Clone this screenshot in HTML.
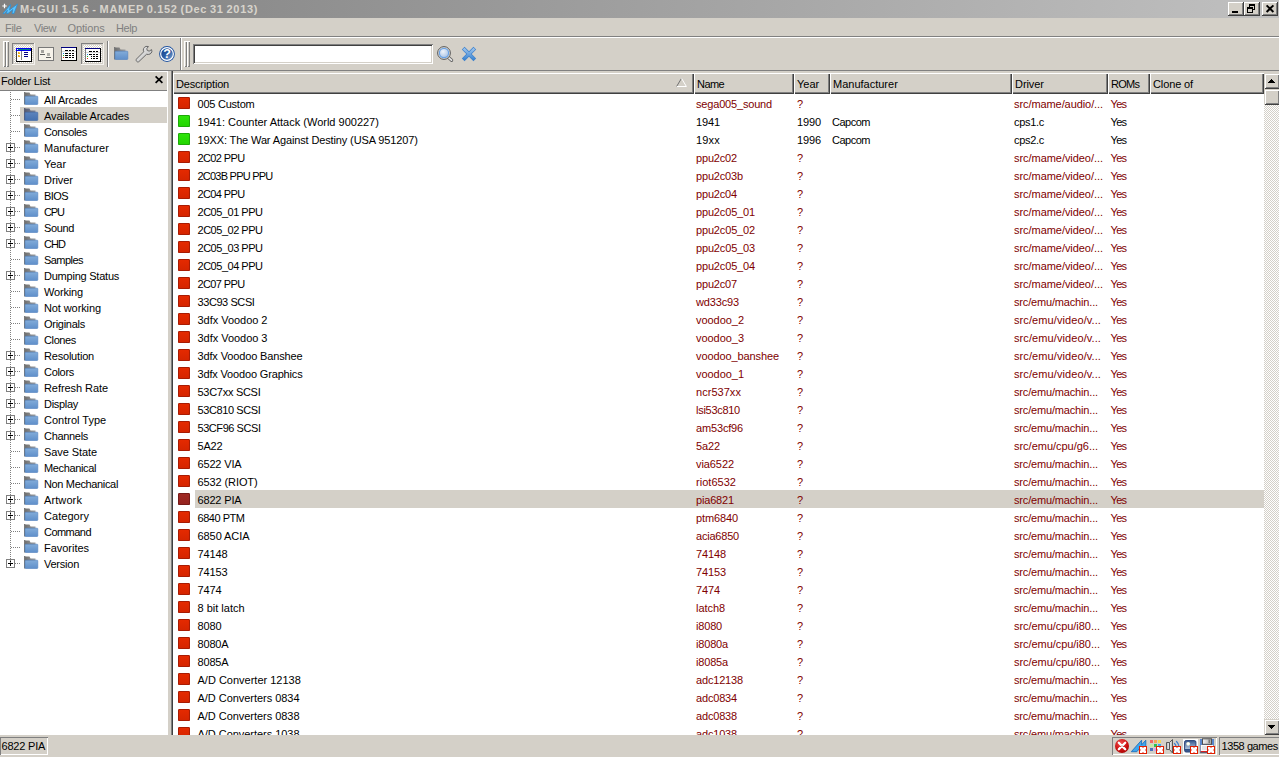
<!DOCTYPE html>
<html lang="en"><head><meta charset="utf-8"><title>M+GUI 1.5.6 - MAMEP 0.152 (Dec 31 2013)</title>
<style>
*{box-sizing:border-box;margin:0;padding:0}
html,body{width:1279px;height:758px;overflow:hidden}
body{position:relative;background:#d4d0c8;font-family:"Liberation Sans",sans-serif;font-size:11px;color:#000;line-height:13px}
i{font-style:normal;display:block}
.abs{position:absolute}
svg{position:absolute;overflow:visible}
/* title */
#title{position:absolute;left:0;top:0;width:1279px;height:18px;background:linear-gradient(90deg,#808080 0,#c0c0c0 100%)}
#title span{position:absolute;left:20px;top:3px;font-weight:bold;font-size:11px;letter-spacing:0.7px;word-spacing:-0.9px;line-height:13px;color:#d8d4cc;white-space:pre}
.wb{position:absolute;top:2px;width:16px;height:14px;background:#d4d0c8;box-shadow:inset -1px -1px #404040,inset 1px 1px #fff,inset -2px -2px #808080}
/* menu */
#menu span{position:absolute;top:22px;color:#808080;line-height:13px}
/* lines */
.ln{position:absolute;height:1px;left:0;width:1279px}
.vl{position:absolute;width:1px}
/* tree */
#tree{position:absolute;left:0;top:91px;width:168px;height:644px;background:#fff}
.ti{position:relative;height:16px;width:168px}
.ti span{position:absolute;left:44px;top:2px;line-height:14px;white-space:pre}
.ti.sel::before{content:"";position:absolute;left:20px;top:0;width:147px;height:16px;background:#d4d0c8}
.fo{left:23px;top:0}
.pm{position:absolute;left:6px;top:4px;width:9px;height:9px;border:1px solid #808080;background:#fff}
.pm::before{content:"";position:absolute;left:1px;top:3px;width:5px;height:1px;background:#000}
.pm::after{content:"";position:absolute;left:3px;top:1px;width:1px;height:5px;background:#000}
.hl,.hl2{position:absolute;top:8px;height:1px;background:repeating-linear-gradient(90deg,#808080 0,#808080 1px,transparent 1px,transparent 2px)}
.hl{left:11px;width:10px}
.hl2{left:15px;width:6px}
/* list */
#list{position:absolute;left:173px;top:94px;width:1091px;height:641px;background:#fff;overflow:hidden}
.row{position:relative;height:18px;width:1091px;white-space:pre}
.row span{position:absolute;top:3px;line-height:14px}
.row.red{color:#800000}
.row.red .c1{color:#000}
.row.sel::before{content:"";position:absolute;left:22px;top:0;width:1069px;height:18px;background:#d4d0c8}
.c1{left:24.5px}.c2{left:523px}.c3{left:624px}.c4{left:659px}.c5{left:841px}.c6{left:937.5px;letter-spacing:-0.7px}
.sq{position:absolute;left:5px;top:3px;width:12px;height:12px;border-radius:1.5px}
.sqr{background:linear-gradient(#e62a00,#d42400);box-shadow:inset 0 0 0 1px #a81c04}
.sqg{background:linear-gradient(#2fe60a,#22d400);box-shadow:inset 0 0 0 1px #1ea808}
.sqs{background:linear-gradient(#a02a24,#94221e);box-shadow:inset 0 0 0 1px #761a18}
/* header */
.hd{position:absolute;top:73px;height:21px;background:#d4d0c8;box-shadow:inset 1px 1px #fff,inset -1px -1px #404040,inset -2px -2px #808080}
.hd span{position:absolute;left:3px;top:4px;line-height:14px;white-space:pre}
/* status */
.sp{position:absolute;top:737px;height:18px;box-shadow:inset 1px 1px #808080,inset -1px -1px #fff}
</style></head>
<body>
<svg width="0" height="0" style="position:absolute"><defs>
<linearGradient id="gb" x1="0" y1="0" x2="0" y2="1"><stop offset="0" stop-color="#82acd9"/><stop offset="1" stop-color="#5f8fca"/></linearGradient>
<linearGradient id="gg" x1="0" y1="0" x2="1" y2="0"><stop offset="0" stop-color="#6a6a6a"/><stop offset="1" stop-color="#a0a0a0"/></linearGradient>
<linearGradient id="gbs" x1="0" y1="0" x2="0" y2="1"><stop offset="0" stop-color="#5d84bd"/><stop offset="1" stop-color="#4571b0"/></linearGradient>
<linearGradient id="ggs" x1="0" y1="0" x2="1" y2="0"><stop offset="0" stop-color="#55596e"/><stop offset="1" stop-color="#7f8496"/></linearGradient>
<g id="fold"><path d="M1 1.5h5.5l1 2h5v3h-11.5z" fill="url(#gg)"/><rect x="1" y="1" width="1.3" height="12.5" fill="#777"/><rect x="2" y="5.2" width="12.8" height="8.3" rx="0.7" fill="url(#gb)" stroke="#4f80bd" stroke-width="0.6"/></g>
<g id="folds"><path d="M1 1.5h5.5l1 2h5v3h-11.5z" fill="url(#ggs)"/><rect x="1" y="1" width="1.3" height="12.5" fill="#5a5f74"/><rect x="2" y="5.2" width="12.8" height="8.3" rx="0.7" fill="url(#gbs)" stroke="#3c66a6" stroke-width="0.6"/></g>
<g id="badge"><rect x="0.5" y="0.5" width="7" height="7" fill="#fff" stroke="#e02000" stroke-width="1"/><path d="M2 2l4 4M6 2l-4 4" stroke="#d00000" stroke-width="0" /><path d="M1 3.2L1 4.8 2 4zM7 3.2L7 4.8 6 4zM3.2 1L4.8 1 4 2zM3.2 7L4.8 7 4 6z" fill="#d80000"/></g>
</defs></svg>
<!-- title bar -->
<div id="title"><span>M+GUI 1.5.6 - MAMEP 0.152 (Dec 31 2013)</span>
<svg style="left:2px;top:3px" width="16" height="12" viewBox="0 0 16 12"><path d="M1 10.5L8.5 1.5 7.5 7 15.5 1 12 10.5 10 10.5 10.8 6.5 6 10.5 4.5 10.5 5.3 7.2 2.5 10.5z" fill="#5cc4ff" stroke="#2f8ed0" stroke-width="0.8"/><path d="M0.3 3h4.4M2.5 0.8v4.4" stroke="#fff" stroke-width="1.2"/></svg>
<div class="wb" style="left:1228px"><i class="abs" style="left:4px;top:9px;width:6px;height:2px;background:#000"></i></div>
<div class="wb" style="left:1244px"><svg width="16" height="14" viewBox="0 0 16 14" shape-rendering="crispEdges"><path d="M5 2h6v2h-6zM5 4h1v1h-1zM10 4h1v4h-2v-1h1zM3 5h6v2h-6zM3 7h1v4h-1zM8 7h1v4h-1zM3 10h6v1h-6z" fill="#000"/></svg></div>
<div class="wb" style="left:1262px"><svg width="16" height="14" viewBox="0 0 16 14"><path d="M4.6 3.4l6.8 6.6M11.4 3.4l-6.8 6.6" stroke="#000" stroke-width="2" fill="none"/></svg></div>
</div>
<!-- menu -->
<div id="menu"><span style="left:5px;letter-spacing:-0.3px">File</span><span style="left:34px;letter-spacing:-0.41px">View</span><span style="left:67.5px;letter-spacing:-0.13px">Options</span><span style="left:116px;letter-spacing:-0.41px">Help</span></div>
<i class="ln" style="top:36px;background:#808080"></i><i class="ln" style="top:37px;background:#fff"></i>
<i class="ln" style="top:70px;background:#808080"></i><i class="ln" style="top:71px;background:#fff;width:168px"></i>
<!-- toolbar -->
<i class="vl" style="left:3px;top:41px;height:26px;width:3px;box-shadow:inset 1px 1px #fff,inset -1px -1px #808080"></i>
<i class="vl" style="left:6px;top:41px;height:26px;width:3px;box-shadow:inset 1px 1px #fff,inset -1px -1px #808080"></i>
<i class="vl" style="left:184px;top:41px;height:26px;width:3px;box-shadow:inset 1px 1px #fff,inset -1px -1px #808080"></i>
<i class="vl" style="left:187px;top:41px;height:26px;width:3px;box-shadow:inset 1px 1px #fff,inset -1px -1px #808080"></i>
<i class="vl" style="left:180px;top:38px;height:32px;background:#808080"></i><i class="vl" style="left:181px;top:38px;height:32px;background:#fff"></i>
<i class="vl" style="left:107px;top:41px;height:26px;background:#808080"></i><i class="vl" style="left:108px;top:41px;height:26px;background:#fff"></i>
<!-- TOOLBTNS -->
<svg width="0" height="0" style="position:absolute"><defs>
<pattern id="dith" width="2" height="2" patternUnits="userSpaceOnUse"><rect width="2" height="2" fill="#fff"/><rect width="1" height="1" fill="#d4d0c8"/><rect x="1" y="1" width="1" height="1" fill="#d4d0c8"/></pattern>
<linearGradient id="gw" x1="0" y1="0" x2="1" y2="1"><stop offset="0" stop-color="#f0f0f0"/><stop offset="1" stop-color="#bcbcbc"/></linearGradient>
<linearGradient id="gh" x1="0" y1="0" x2="1" y2="1"><stop offset="0" stop-color="#123f88"/><stop offset="0.5" stop-color="#2d5da3"/><stop offset="1" stop-color="#86add8"/></linearGradient>
<radialGradient id="gm" cx="0.4" cy="0.35" r="0.7"><stop offset="0" stop-color="#eef3fa"/><stop offset="1" stop-color="#a9c3e6"/></radialGradient>
<linearGradient id="gx" x1="0" y1="0" x2="0" y2="1"><stop offset="0" stop-color="#9cc3ec"/><stop offset="1" stop-color="#3d86d2"/></linearGradient>
</defs></svg>
<!-- pressed button 1 -->
<svg style="left:12px;top:43px" width="23" height="22" viewBox="0 0 23 22" shape-rendering="crispEdges">
<rect x="0" y="0" width="23" height="22" fill="#f4f2ee"/><rect x="0" y="0" width="22" height="21" fill="#808080"/><rect x="1" y="1" width="21" height="20" fill="#d4d0c8"/><rect x="2" y="2" width="19" height="18" fill="url(#dith)"/>
<g transform="translate(4,5)">
<rect x="0" y="0" width="16" height="14" fill="#000"/><rect x="0" y="0" width="15" height="3" fill="#0000f0"/><rect x="1" y="1" width="13" height="1" fill="#008080"/><rect x="1" y="1" width="1" height="1" fill="#e8f0e0"/>
<rect x="1" y="3" width="14" height="10" fill="#fff"/><rect x="0" y="3" width="1" height="10" fill="#404040"/><rect x="5" y="3" width="1" height="9" fill="#808080"/>
<rect x="2" y="4" width="2" height="2" fill="#f0b020"/><rect x="2" y="7" width="2" height="2" fill="#f0b020"/><rect x="3" y="4" width="1" height="1" fill="#f8d860"/><rect x="3" y="7" width="1" height="1" fill="#f8d860"/>
<rect x="8" y="4" width="4" height="1" fill="#000080"/><rect x="8" y="6" width="4" height="1" fill="#000080"/><rect x="8" y="8" width="4" height="1" fill="#000080"/>
</g></svg>
<!-- button 2 icon -->
<svg style="left:38px;top:47px" width="16" height="14" viewBox="0 0 16 14" shape-rendering="crispEdges">
<rect x="0" y="0" width="16" height="14" fill="#787878"/><rect x="1" y="1" width="14" height="12" fill="#f6f2ea"/>
<rect x="3" y="3" width="3" height="3" fill="#a4a29e"/><rect x="2" y="7" width="5" height="1" fill="#606060"/>
<rect x="9" y="6" width="3" height="3" fill="#b0aea8"/><rect x="8" y="10" width="5" height="1" fill="#606060"/>
</svg>
<!-- button 3 icon -->
<svg style="left:61px;top:47px" width="16" height="14" viewBox="0 0 16 14" shape-rendering="crispEdges">
<rect x="0" y="0" width="16" height="14" fill="#000"/><rect x="0" y="0" width="15" height="1" fill="#000080"/><rect x="0" y="1" width="1" height="12" fill="#808080"/><rect x="1" y="1" width="14" height="12" fill="#fff"/><rect x="1" y="4" width="14" height="1" fill="#d8d8d8"/>
<path d="M4 3h3v1h-3zM8 3h2v1h-2zM11 3h2v1h-2zM4 6h3v1h-3zM8 6h2v1h-2zM11 6h2v1h-2zM4 8h3v1h-3zM8 8h2v1h-2zM11 8h2v1h-2zM4 10h3v1h-3zM8 10h2v1h-2zM11 10h2v1h-2z" fill="#000"/>
<rect x="2" y="6" width="1" height="1" fill="#1890e8"/><rect x="2" y="8" width="1" height="1" fill="#18b018"/><rect x="2" y="10" width="1" height="1" fill="#e83010"/>
</svg>
<!-- pressed button 4 -->
<svg style="left:81px;top:43px" width="23" height="22" viewBox="0 0 23 22" shape-rendering="crispEdges">
<rect x="0" y="0" width="23" height="22" fill="#f4f2ee"/><rect x="0" y="0" width="22" height="21" fill="#808080"/><rect x="1" y="1" width="21" height="20" fill="#d4d0c8"/><rect x="2" y="2" width="19" height="18" fill="url(#dith)"/>
<g transform="translate(4,5)">
<rect x="0" y="0" width="16" height="14" fill="#000"/><rect x="0" y="0" width="15" height="1" fill="#000080"/><rect x="0" y="1" width="1" height="12" fill="#808080"/><rect x="1" y="1" width="14" height="12" fill="#fff"/><rect x="1" y="4" width="14" height="1" fill="#d8d8d8"/>
<path d="M4 3h3v1h-3zM8 3h2v1h-2zM11 3h2v1h-2zM4 6h3v1h-3zM8 6h2v1h-2zM11 6h2v1h-2zM6 8h1v1h-1zM8 8h2v1h-2zM11 8h2v1h-2zM6 10h1v1h-1zM8 10h2v1h-2zM11 10h2v1h-2z" fill="#000"/>
<rect x="2" y="6" width="1" height="1" fill="#1890e8"/><rect x="2" y="8" width="1" height="1" fill="#18b018"/><rect x="2" y="10" width="1" height="1" fill="#e83010"/>
</g></svg>
<!-- folder btn -->
<svg style="left:113px;top:46px" width="16" height="16" viewBox="0 0 16 16"><use href="#fold"/></svg>
<!-- wrench -->
<svg style="left:135px;top:45px" width="18" height="18" viewBox="135 45 18 18">
<path d="M136.5 59L143.7 51.8C142.7 49.6 143.6 47.2 146 46.4L148.4 46.5L146.8 48.7L147.3 50.5L149.2 51.1L151.6 49.6L151.9 51.6C151.4 53.8 149 55 146.5 54.3L138.9 61.6C137.4 62.8 135.3 60.7 136.5 59Z" fill="url(#gw)" stroke="#686868" stroke-width="1" stroke-linejoin="round"/></svg>
<!-- help -->
<svg style="left:159px;top:46px" width="16" height="16" viewBox="0 0 16 16"><circle cx="8" cy="8" r="7.9" fill="#1f52a0"/><circle cx="8" cy="8" r="6.35" fill="url(#gh)" stroke="#fff" stroke-width="1.15"/><text x="8.1" y="12.4" text-anchor="middle" font-family="Liberation Sans,sans-serif" font-weight="bold" font-size="12.5" fill="#fff">?</text></svg>
<!-- search box -->
<i class="abs" style="left:193px;top:44px;width:240px;height:20px;background:#fff;box-shadow:inset 1px 1px #808080,inset -1px -1px #fff,inset 2px 2px #404040,inset -2px -2px #d4d0c8"></i>
<!-- SEARCHICONS -->
<svg style="left:436px;top:45px" width="18" height="18" viewBox="436 45 18 18"><path d="M448.3 57.3L451.6 60.3" stroke="#666" stroke-width="3.2" stroke-linecap="round"/><path d="M448.6 57.6L451.5 60.2" stroke="#e4e4e4" stroke-width="1.6" stroke-linecap="round"/><circle cx="444" cy="53" r="6.4" fill="#d8d8d4" stroke="#5a5a5a" stroke-width="1"/><circle cx="444" cy="53" r="4.6" fill="url(#gm)" stroke="#6aa2e6" stroke-width="1.2"/></svg>
<svg style="left:461px;top:46px" width="16" height="16" viewBox="461 46 16 16"><path d="M463.2 48.2L474.8 59.8M474.8 48.2L463.2 59.8" stroke="#3f82cc" stroke-width="3.8" stroke-linecap="butt"/><path d="M463.6 48.6L474.4 59.4M474.4 48.6L463.6 59.4" stroke="url(#gx)" stroke-width="2.4" stroke-linecap="butt"/></svg>

<!-- folder list caption -->
<div class="abs" style="left:0;top:72px;width:168px;height:19px"><span class="abs" style="left:1px;top:2px;line-height:14px;letter-spacing:-0.21px;white-space:pre">Folder List</span>
<svg style="left:155px;top:4px" width="8" height="8" viewBox="0 0 8 8"><path d="M0.6 0.3l6.8 6.6M7.4 0.3l-6.8 6.6" stroke="#000" stroke-width="1.7"/></svg></div>
<i class="vl" style="left:167px;top:71px;height:20px;background:#fff"></i>
<i class="ln" style="top:90px;background:#808080;width:167px"></i>
<!-- list border -->
<i class="vl" style="left:171px;top:71px;height:664px;background:#808080"></i><i class="vl" style="left:172px;top:71px;height:664px;background:#404040"></i>
<!-- headers -->
<div class="hd" style="left:173px;width:521px"><span style="letter-spacing:-0.18px">Description</span><svg style="left:503px;top:5px" width="11" height="9" viewBox="0 0 11 9"><path d="M5.5 0.3L0.6 8.5" stroke="#707070" fill="none"/><path d="M5.5 0.3L10.4 8.5H0.8" stroke="#fff" fill="none"/></svg></div>
<div class="hd" style="left:694px;width:100px"><span style="letter-spacing:-0.55px">Name</span></div>
<div class="hd" style="left:794px;width:36px"><span>Year</span></div>
<div class="hd" style="left:830px;width:182px"><span>Manufacturer</span></div>
<div class="hd" style="left:1012px;width:96px"><span style="letter-spacing:-0.06px">Driver</span></div>
<div class="hd" style="left:1108px;width:42px"><span style="letter-spacing:-0.7px">ROMs</span></div>
<div class="hd" style="left:1150px;width:114px"><span style="letter-spacing:-0.12px">Clone of</span></div>
<i class="abs" style="left:10px;top:92px;width:1px;height:472px;z-index:3;background:repeating-linear-gradient(180deg,#808080 0,#808080 1px,transparent 1px,transparent 2px)"></i>
<div id="tree">
<div class="ti"><i class="hl"></i><svg class="fo" width="16" height="16" viewBox="0 0 16 16"><use href="#fold"/></svg><span style="letter-spacing:-0.18px">All Arcades</span></div>
<div class="ti sel"><i class="hl"></i><svg class="fo" width="16" height="16" viewBox="0 0 16 16"><use href="#folds"/></svg><span style="letter-spacing:-0.13px">Available Arcades</span></div>
<div class="ti"><i class="hl"></i><svg class="fo" width="16" height="16" viewBox="0 0 16 16"><use href="#fold"/></svg><span style="letter-spacing:-0.36px">Consoles</span></div>
<div class="ti"><i class="hl2"></i><i class="pm"></i><svg class="fo" width="16" height="16" viewBox="0 0 16 16"><use href="#fold"/></svg><span>Manufacturer</span></div>
<div class="ti"><i class="hl2"></i><i class="pm"></i><svg class="fo" width="16" height="16" viewBox="0 0 16 16"><use href="#fold"/></svg><span style="letter-spacing:-0.06px">Year</span></div>
<div class="ti"><i class="hl2"></i><i class="pm"></i><svg class="fo" width="16" height="16" viewBox="0 0 16 16"><use href="#fold"/></svg><span style="letter-spacing:-0.06px">Driver</span></div>
<div class="ti"><i class="hl2"></i><i class="pm"></i><svg class="fo" width="16" height="16" viewBox="0 0 16 16"><use href="#fold"/></svg><span style="letter-spacing:-0.57px">BIOS</span></div>
<div class="ti"><i class="hl2"></i><i class="pm"></i><svg class="fo" width="16" height="16" viewBox="0 0 16 16"><use href="#fold"/></svg><span style="letter-spacing:-1.08px">CPU</span></div>
<div class="ti"><i class="hl2"></i><i class="pm"></i><svg class="fo" width="16" height="16" viewBox="0 0 16 16"><use href="#fold"/></svg><span style="letter-spacing:-0.36px">Sound</span></div>
<div class="ti"><i class="hl2"></i><i class="pm"></i><svg class="fo" width="16" height="16" viewBox="0 0 16 16"><use href="#fold"/></svg><span style="letter-spacing:-0.95px">CHD</span></div>
<div class="ti"><i class="hl"></i><svg class="fo" width="16" height="16" viewBox="0 0 16 16"><use href="#fold"/></svg><span style="letter-spacing:-0.54px">Samples</span></div>
<div class="ti"><i class="hl2"></i><i class="pm"></i><svg class="fo" width="16" height="16" viewBox="0 0 16 16"><use href="#fold"/></svg><span style="letter-spacing:-0.23px">Dumping Status</span></div>
<div class="ti"><i class="hl"></i><svg class="fo" width="16" height="16" viewBox="0 0 16 16"><use href="#fold"/></svg><span style="letter-spacing:-0.17px">Working</span></div>
<div class="ti"><i class="hl"></i><svg class="fo" width="16" height="16" viewBox="0 0 16 16"><use href="#fold"/></svg><span style="letter-spacing:-0.10px">Not working</span></div>
<div class="ti"><i class="hl"></i><svg class="fo" width="16" height="16" viewBox="0 0 16 16"><use href="#fold"/></svg><span style="letter-spacing:-0.27px">Originals</span></div>
<div class="ti"><i class="hl"></i><svg class="fo" width="16" height="16" viewBox="0 0 16 16"><use href="#fold"/></svg><span style="letter-spacing:-0.38px">Clones</span></div>
<div class="ti"><i class="hl2"></i><i class="pm"></i><svg class="fo" width="16" height="16" viewBox="0 0 16 16"><use href="#fold"/></svg><span style="letter-spacing:-0.20px">Resolution</span></div>
<div class="ti"><i class="hl2"></i><i class="pm"></i><svg class="fo" width="16" height="16" viewBox="0 0 16 16"><use href="#fold"/></svg><span style="letter-spacing:-0.30px">Colors</span></div>
<div class="ti"><i class="hl2"></i><i class="pm"></i><svg class="fo" width="16" height="16" viewBox="0 0 16 16"><use href="#fold"/></svg><span style="letter-spacing:-0.07px">Refresh Rate</span></div>
<div class="ti"><i class="hl2"></i><i class="pm"></i><svg class="fo" width="16" height="16" viewBox="0 0 16 16"><use href="#fold"/></svg><span style="letter-spacing:-0.30px">Display</span></div>
<div class="ti"><i class="hl2"></i><i class="pm"></i><svg class="fo" width="16" height="16" viewBox="0 0 16 16"><use href="#fold"/></svg><span>Control Type</span></div>
<div class="ti"><i class="hl2"></i><i class="pm"></i><svg class="fo" width="16" height="16" viewBox="0 0 16 16"><use href="#fold"/></svg><span style="letter-spacing:-0.31px">Channels</span></div>
<div class="ti"><i class="hl"></i><svg class="fo" width="16" height="16" viewBox="0 0 16 16"><use href="#fold"/></svg><span style="letter-spacing:-0.08px">Save State</span></div>
<div class="ti"><i class="hl"></i><svg class="fo" width="16" height="16" viewBox="0 0 16 16"><use href="#fold"/></svg><span style="letter-spacing:-0.36px">Mechanical</span></div>
<div class="ti"><i class="hl"></i><svg class="fo" width="16" height="16" viewBox="0 0 16 16"><use href="#fold"/></svg><span style="letter-spacing:-0.35px">Non Mechanical</span></div>
<div class="ti"><i class="hl2"></i><i class="pm"></i><svg class="fo" width="16" height="16" viewBox="0 0 16 16"><use href="#fold"/></svg><span style="letter-spacing:0.10px">Artwork</span></div>
<div class="ti"><i class="hl2"></i><i class="pm"></i><svg class="fo" width="16" height="16" viewBox="0 0 16 16"><use href="#fold"/></svg><span style="letter-spacing:0.04px">Category</span></div>
<div class="ti"><i class="hl"></i><svg class="fo" width="16" height="16" viewBox="0 0 16 16"><use href="#fold"/></svg><span style="letter-spacing:-0.54px">Command</span></div>
<div class="ti"><i class="hl"></i><svg class="fo" width="16" height="16" viewBox="0 0 16 16"><use href="#fold"/></svg><span style="letter-spacing:-0.03px">Favorites</span></div>
<div class="ti"><i class="hl2"></i><i class="pm"></i><svg class="fo" width="16" height="16" viewBox="0 0 16 16"><use href="#fold"/></svg><span style="letter-spacing:-0.24px">Version</span></div>
</div>
<div id="list">
<div class="row red"><i class="sq sqr"></i><span class="c1" style="letter-spacing:-0.23px">005 Custom</span><span class="c2" style="letter-spacing:-0.18px">sega005_sound</span><span class="c3">?</span><span class="c4"></span><span class="c5" style="letter-spacing:-0.08px">src/mame/audio/...</span><span class="c6">Yes</span></div>
<div class="row"><i class="sq sqg"></i><span class="c1">1941: Counter Attack (World 900227)</span><span class="c2" style="letter-spacing:-0.12px">1941</span><span class="c3" style="letter-spacing:-0.12px">1990</span><span class="c4" style="letter-spacing:-0.49px">Capcom</span><span class="c5" style="letter-spacing:-0.30px">cps1.c</span><span class="c6">Yes</span></div>
<div class="row"><i class="sq sqg"></i><span class="c1" style="letter-spacing:-0.13px">19XX: The War Against Destiny (USA 951207)</span><span class="c2" style="letter-spacing:0.19px">19xx</span><span class="c3" style="letter-spacing:-0.12px">1996</span><span class="c4" style="letter-spacing:-0.49px">Capcom</span><span class="c5" style="letter-spacing:-0.30px">cps2.c</span><span class="c6">Yes</span></div>
<div class="row red"><i class="sq sqr"></i><span class="c1" style="letter-spacing:-0.62px">2C02 PPU</span><span class="c2" style="letter-spacing:-0.17px">ppu2c02</span><span class="c3">?</span><span class="c4"></span><span class="c5" style="letter-spacing:-0.05px">src/mame/video/...</span><span class="c6">Yes</span></div>
<div class="row red"><i class="sq sqr"></i><span class="c1" style="letter-spacing:-0.77px">2C03B PPU PPU</span><span class="c2" style="letter-spacing:-0.17px">ppu2c03b</span><span class="c3">?</span><span class="c4"></span><span class="c5" style="letter-spacing:-0.05px">src/mame/video/...</span><span class="c6">Yes</span></div>
<div class="row red"><i class="sq sqr"></i><span class="c1" style="letter-spacing:-0.62px">2C04 PPU</span><span class="c2" style="letter-spacing:-0.17px">ppu2c04</span><span class="c3">?</span><span class="c4"></span><span class="c5" style="letter-spacing:-0.05px">src/mame/video/...</span><span class="c6">Yes</span></div>
<div class="row red"><i class="sq sqr"></i><span class="c1" style="letter-spacing:-0.48px">2C05_01 PPU</span><span class="c2" style="letter-spacing:-0.16px">ppu2c05_01</span><span class="c3">?</span><span class="c4"></span><span class="c5" style="letter-spacing:-0.05px">src/mame/video/...</span><span class="c6">Yes</span></div>
<div class="row red"><i class="sq sqr"></i><span class="c1" style="letter-spacing:-0.48px">2C05_02 PPU</span><span class="c2" style="letter-spacing:-0.16px">ppu2c05_02</span><span class="c3">?</span><span class="c4"></span><span class="c5" style="letter-spacing:-0.05px">src/mame/video/...</span><span class="c6">Yes</span></div>
<div class="row red"><i class="sq sqr"></i><span class="c1" style="letter-spacing:-0.48px">2C05_03 PPU</span><span class="c2" style="letter-spacing:-0.16px">ppu2c05_03</span><span class="c3">?</span><span class="c4"></span><span class="c5" style="letter-spacing:-0.05px">src/mame/video/...</span><span class="c6">Yes</span></div>
<div class="row red"><i class="sq sqr"></i><span class="c1" style="letter-spacing:-0.48px">2C05_04 PPU</span><span class="c2" style="letter-spacing:-0.16px">ppu2c05_04</span><span class="c3">?</span><span class="c4"></span><span class="c5" style="letter-spacing:-0.05px">src/mame/video/...</span><span class="c6">Yes</span></div>
<div class="row red"><i class="sq sqr"></i><span class="c1" style="letter-spacing:-0.62px">2C07 PPU</span><span class="c2" style="letter-spacing:-0.17px">ppu2c07</span><span class="c3">?</span><span class="c4"></span><span class="c5" style="letter-spacing:-0.05px">src/mame/video/...</span><span class="c6">Yes</span></div>
<div class="row red"><i class="sq sqr"></i><span class="c1" style="letter-spacing:-0.42px">33C93 SCSI</span><span class="c2" style="letter-spacing:-0.15px">wd33c93</span><span class="c3">?</span><span class="c4"></span><span class="c5" style="letter-spacing:-0.17px">src/emu/machin...</span><span class="c6">Yes</span></div>
<div class="row red"><i class="sq sqr"></i><span class="c1" style="letter-spacing:-0.03px">3dfx Voodoo 2</span><span class="c2" style="letter-spacing:-0.04px">voodoo_2</span><span class="c3">?</span><span class="c4"></span><span class="c5" style="letter-spacing:0.09px">src/emu/video/v...</span><span class="c6">Yes</span></div>
<div class="row red"><i class="sq sqr"></i><span class="c1" style="letter-spacing:-0.03px">3dfx Voodoo 3</span><span class="c2" style="letter-spacing:-0.04px">voodoo_3</span><span class="c3">?</span><span class="c4"></span><span class="c5" style="letter-spacing:0.09px">src/emu/video/v...</span><span class="c6">Yes</span></div>
<div class="row red"><i class="sq sqr"></i><span class="c1" style="letter-spacing:-0.14px">3dfx Voodoo Banshee</span><span class="c2" style="letter-spacing:-0.10px">voodoo_banshee</span><span class="c3">?</span><span class="c4"></span><span class="c5" style="letter-spacing:0.09px">src/emu/video/v...</span><span class="c6">Yes</span></div>
<div class="row red"><i class="sq sqr"></i><span class="c1" style="letter-spacing:-0.16px">3dfx Voodoo Graphics</span><span class="c2" style="letter-spacing:-0.04px">voodoo_1</span><span class="c3">?</span><span class="c4"></span><span class="c5" style="letter-spacing:0.09px">src/emu/video/v...</span><span class="c6">Yes</span></div>
<div class="row red"><i class="sq sqr"></i><span class="c1" style="letter-spacing:-0.28px">53C7xx SCSI</span><span class="c2" style="letter-spacing:0.04px">ncr537xx</span><span class="c3">?</span><span class="c4"></span><span class="c5" style="letter-spacing:-0.17px">src/emu/machin...</span><span class="c6">Yes</span></div>
<div class="row red"><i class="sq sqr"></i><span class="c1" style="letter-spacing:-0.39px">53C810 SCSI</span><span class="c2" style="letter-spacing:-0.28px">lsi53c810</span><span class="c3">?</span><span class="c4"></span><span class="c5" style="letter-spacing:-0.17px">src/emu/machin...</span><span class="c6">Yes</span></div>
<div class="row red"><i class="sq sqr"></i><span class="c1" style="letter-spacing:-0.44px">53CF96 SCSI</span><span class="c2" style="letter-spacing:-0.16px">am53cf96</span><span class="c3">?</span><span class="c4"></span><span class="c5" style="letter-spacing:-0.17px">src/emu/machin...</span><span class="c6">Yes</span></div>
<div class="row red"><i class="sq sqr"></i><span class="c1" style="letter-spacing:-0.18px">5A22</span><span class="c2" style="letter-spacing:-0.12px">5a22</span><span class="c3">?</span><span class="c4"></span><span class="c5" style="letter-spacing:-0.02px">src/emu/cpu/g6...</span><span class="c6">Yes</span></div>
<div class="row red"><i class="sq sqr"></i><span class="c1" style="letter-spacing:-0.16px">6522 VIA</span><span class="c2" style="letter-spacing:-0.08px">via6522</span><span class="c3">?</span><span class="c4"></span><span class="c5" style="letter-spacing:-0.17px">src/emu/machin...</span><span class="c6">Yes</span></div>
<div class="row red"><i class="sq sqr"></i><span class="c1" style="letter-spacing:-0.10px">6532 (RIOT)</span><span class="c2" style="letter-spacing:0.03px">riot6532</span><span class="c3">?</span><span class="c4"></span><span class="c5" style="letter-spacing:-0.17px">src/emu/machin...</span><span class="c6">Yes</span></div>
<div class="row red sel"><i class="sq sqs"></i><span class="c1" style="letter-spacing:-0.16px">6822 PIA</span><span class="c2" style="letter-spacing:-0.17px">pia6821</span><span class="c3">?</span><span class="c4"></span><span class="c5" style="letter-spacing:-0.17px">src/emu/machin...</span><span class="c6">Yes</span></div>
<div class="row red"><i class="sq sqr"></i><span class="c1" style="letter-spacing:-0.47px">6840 PTM</span><span class="c2" style="letter-spacing:-0.12px">ptm6840</span><span class="c3">?</span><span class="c4"></span><span class="c5" style="letter-spacing:-0.17px">src/emu/machin...</span><span class="c6">Yes</span></div>
<div class="row red"><i class="sq sqr"></i><span class="c1" style="letter-spacing:-0.07px">6850 ACIA</span><span class="c2" style="letter-spacing:-0.21px">acia6850</span><span class="c3">?</span><span class="c4"></span><span class="c5" style="letter-spacing:-0.17px">src/emu/machin...</span><span class="c6">Yes</span></div>
<div class="row red"><i class="sq sqr"></i><span class="c1" style="letter-spacing:-0.12px">74148</span><span class="c2" style="letter-spacing:-0.12px">74148</span><span class="c3">?</span><span class="c4"></span><span class="c5" style="letter-spacing:-0.17px">src/emu/machin...</span><span class="c6">Yes</span></div>
<div class="row red"><i class="sq sqr"></i><span class="c1" style="letter-spacing:-0.12px">74153</span><span class="c2" style="letter-spacing:-0.12px">74153</span><span class="c3">?</span><span class="c4"></span><span class="c5" style="letter-spacing:-0.17px">src/emu/machin...</span><span class="c6">Yes</span></div>
<div class="row red"><i class="sq sqr"></i><span class="c1" style="letter-spacing:-0.12px">7474</span><span class="c2" style="letter-spacing:-0.12px">7474</span><span class="c3">?</span><span class="c4"></span><span class="c5" style="letter-spacing:-0.17px">src/emu/machin...</span><span class="c6">Yes</span></div>
<div class="row red"><i class="sq sqr"></i><span class="c1">8 bit latch</span><span class="c2" style="letter-spacing:-0.06px">latch8</span><span class="c3">?</span><span class="c4"></span><span class="c5" style="letter-spacing:-0.17px">src/emu/machin...</span><span class="c6">Yes</span></div>
<div class="row red"><i class="sq sqr"></i><span class="c1" style="letter-spacing:-0.12px">8080</span><span class="c2" style="letter-spacing:-0.18px">i8080</span><span class="c3">?</span><span class="c4"></span><span class="c5" style="letter-spacing:-0.05px">src/emu/cpu/i80...</span><span class="c6">Yes</span></div>
<div class="row red"><i class="sq sqr"></i><span class="c1" style="letter-spacing:-0.16px">8080A</span><span class="c2" style="letter-spacing:-0.17px">i8080a</span><span class="c3">?</span><span class="c4"></span><span class="c5" style="letter-spacing:-0.05px">src/emu/cpu/i80...</span><span class="c6">Yes</span></div>
<div class="row red"><i class="sq sqr"></i><span class="c1" style="letter-spacing:-0.16px">8085A</span><span class="c2" style="letter-spacing:-0.17px">i8085a</span><span class="c3">?</span><span class="c4"></span><span class="c5" style="letter-spacing:-0.05px">src/emu/cpu/i80...</span><span class="c6">Yes</span></div>
<div class="row red"><i class="sq sqr"></i><span class="c1">A/D Converter 12138</span><span class="c2" style="letter-spacing:-0.17px">adc12138</span><span class="c3">?</span><span class="c4"></span><span class="c5" style="letter-spacing:-0.17px">src/emu/machin...</span><span class="c6">Yes</span></div>
<div class="row red"><i class="sq sqr"></i><span class="c1" style="letter-spacing:-0.04px">A/D Converters 0834</span><span class="c2" style="letter-spacing:-0.17px">adc0834</span><span class="c3">?</span><span class="c4"></span><span class="c5" style="letter-spacing:-0.17px">src/emu/machin...</span><span class="c6">Yes</span></div>
<div class="row red"><i class="sq sqr"></i><span class="c1" style="letter-spacing:-0.04px">A/D Converters 0838</span><span class="c2" style="letter-spacing:-0.17px">adc0838</span><span class="c3">?</span><span class="c4"></span><span class="c5" style="letter-spacing:-0.17px">src/emu/machin...</span><span class="c6">Yes</span></div>
<div class="row red"><i class="sq sqr"></i><span class="c1" style="letter-spacing:-0.04px">A/D Converters 1038</span><span class="c2" style="letter-spacing:-0.17px">adc1038</span><span class="c3">?</span><span class="c4"></span><span class="c5" style="letter-spacing:-0.17px">src/emu/machin...</span><span class="c6">Yes</span></div>
</div>
<!-- scrollbar -->
<div class="abs" style="left:1264px;top:73px;width:16px;height:662px;background:#fff;background-image:conic-gradient(#d4d0c8 25%,#fff 0 50%,#d4d0c8 0 75%,#fff 0);background-size:2px 2px"></div>
<div class="abs" style="left:1264px;top:73px;width:16px;height:16px;background:#d4d0c8;box-shadow:inset 1px 1px #d4d0c8,inset -1px -1px #404040,inset 2px 2px #fff,inset -2px -2px #808080"><svg width="16" height="16" viewBox="0 0 16 16" shape-rendering="crispEdges"><path d="M7 6h1v1h1v1h1v1h1v1h-7v-1h1v-1h1v-1h1z" fill="#000"/></svg></div>
<div class="abs" style="left:1264px;top:89px;width:16px;height:16px;background:#d4d0c8;box-shadow:inset 1px 1px #d4d0c8,inset -1px -1px #404040,inset 2px 2px #fff,inset -2px -2px #808080"></div>
<div class="abs" style="left:1264px;top:719px;width:16px;height:16px;background:#d4d0c8;box-shadow:inset 1px 1px #d4d0c8,inset -1px -1px #404040,inset 2px 2px #fff,inset -2px -2px #808080"><svg width="16" height="16" viewBox="0 0 16 16" shape-rendering="crispEdges"><path d="M4 6h7v1h-1v1h-1v1h-1v1h-1v-1h-1v-1h-1v-1h-1z" fill="#000"/></svg></div>
<!-- status bar -->
<div class="abs" style="left:0;top:735px;width:1279px;height:23px;background:#d4d0c8"></div>
<div class="sp" style="left:0;width:48px"><span class="abs" style="left:1.5px;top:2px;line-height:14px;white-space:pre;letter-spacing:-0.2px">6822 PIA</span></div>
<div class="sp" style="left:1112px;width:105px"></div>
<div class="sp" style="left:1219px;width:62px"><span class="abs" style="left:2.5px;top:2px;line-height:14px;white-space:pre;letter-spacing:-0.42px">1358 games</span></div>
<!-- STATUSICONS -->
<svg width="0" height="0" style="position:absolute"><defs>
<radialGradient id="gr" cx="0.4" cy="0.3" r="0.8"><stop offset="0" stop-color="#f05050"/><stop offset="0.6" stop-color="#cc1010"/><stop offset="1" stop-color="#a00000"/></radialGradient>
<linearGradient id="gmon" x1="0" y1="0" x2="0" y2="1"><stop offset="0" stop-color="#38598f"/><stop offset="0.7" stop-color="#a6bdd8"/><stop offset="0.72" stop-color="#27457c"/><stop offset="1" stop-color="#44659a"/></linearGradient>
<linearGradient id="gsl" x1="0" y1="0" x2="1" y2="0"><stop offset="0" stop-color="#f4f4f4"/><stop offset="1" stop-color="#a8a8a8"/></linearGradient>
<linearGradient id="gsp" x1="0" y1="0" x2="1" y2="0"><stop offset="0" stop-color="#b0b0b0"/><stop offset="0.5" stop-color="#f4f4f4"/><stop offset="1" stop-color="#b8b8b8"/></linearGradient>
</defs></svg>
<svg style="left:1114px;top:738px" width="104" height="17" viewBox="1114 738 104 17">
<!-- 1 red x -->
<circle cx="1122" cy="746" r="7" fill="url(#gr)"/><path d="M1118.8 742.8l6.4 6.4M1125.2 742.8l-6.4 6.4" stroke="#fff" stroke-width="2.3" stroke-linecap="round"/><rect x="1121" y="745" width="2" height="2" fill="#ddd"/>
<!-- 2 M logo -->
<path d="M1131.3 751.7L1141.6 740.2V744.8L1145.8 740.2V751.7H1141V747L1136.8 751.7z" fill="#3ea6ee" stroke="#1d6fbe" stroke-width="0.9" stroke-linejoin="round"/>
<use href="#badge" x="1139" y="746"/>
<!-- 3 colour grid -->
<g shape-rendering="crispEdges"><rect x="1150" y="740" width="3" height="3" fill="#f26464"/><rect x="1154" y="740" width="3" height="3" fill="#f8a258"/><rect x="1158" y="740" width="3" height="3" fill="#f6d654"/>
<rect x="1150" y="744" width="3" height="3" fill="#c6e8a2"/><rect x="1154" y="744" width="3" height="3" fill="#2cc254"/><rect x="1158" y="744" width="3" height="3" fill="#44aaf2"/>
<rect x="1150" y="748" width="3" height="3" fill="#4a70bc"/><rect x="1154" y="748" width="3" height="3" fill="#d8a2ea"/></g>
<use href="#badge" x="1156" y="746"/>
<!-- 4 speaker -->
<path d="M1166.5 742.5h3l3-3v13.5l-3-3.5h-3z" fill="url(#gsp)" stroke="#585858" stroke-width="1" stroke-linejoin="round"/><path d="M1169.5 742.5v7" stroke="#585858" stroke-width="1"/>
<path d="M1174.5 743.5q1.3 1 1.5 3M1176.5 741.5q2.2 2 2.5 5" fill="none" stroke="#3f7fd0" stroke-width="1.3" stroke-linecap="round"/>
<use href="#badge" x="1173" y="746"/>
<!-- 5 monitor -->
<rect x="1183" y="739" width="15" height="15" fill="#fdfdfd"/><rect x="1184.6" y="740.6" width="11.3" height="11.4" rx="1.5" fill="url(#gmon)" stroke="#2a4478" stroke-width="1"/><circle cx="1188.2" cy="743.8" r="1.9" fill="#fbfbe0"/><circle cx="1188.2" cy="743.8" r="1" fill="#fff"/>
<use href="#badge" x="1190" y="746"/>
<!-- 6 floppy -->
<rect x="1200" y="739" width="14" height="14" fill="#5a86cc"/><rect x="1202.5" y="738.8" width="9" height="5.5" fill="url(#gsl)" stroke="#505050" stroke-width="1"/><rect x="1208.5" y="739.5" width="1.5" height="3.5" fill="#787878"/>
<rect x="1200.6" y="745" width="12.8" height="6" fill="#fafafa"/><path d="M1202 747h10M1202 749h10" stroke="#c0c0c8" stroke-width="0.8"/><rect x="1200.6" y="751" width="12.8" height="1.4" fill="#d82020"/><rect x="1200" y="752.4" width="14" height="0.8" fill="#505860"/><path d="M1200.3 745v8M1213.7 745v8" stroke="#70747c" stroke-width="0.6"/>
<use href="#badge" x="1207" y="746"/>
</svg>

<i class="ln" style="top:757px;background:#fff"></i>
</body></html>
